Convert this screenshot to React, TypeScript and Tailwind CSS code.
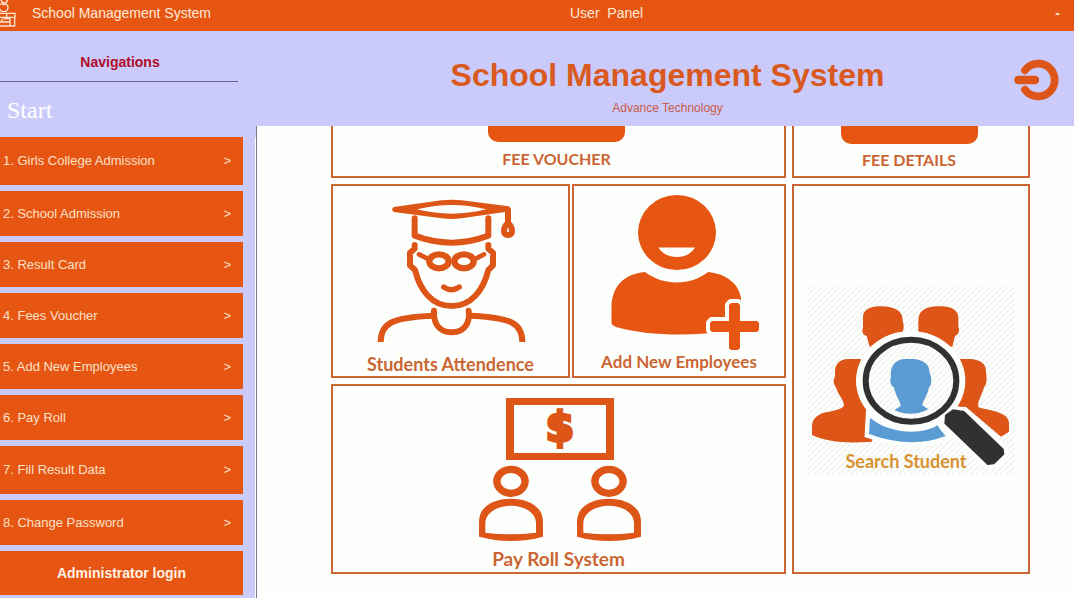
import type { ReactNode } from "react";

const navItems = [
  { label: "1. Girls College Admission", tall: true },
  { label: "2. School Admission" },
  { label: "3. Result Card" },
  { label: "4. Fees Voucher" },
  { label: "5. Add New Employees" },
  { label: "6. Pay Roll" },
  { label: "7. Fill Result Data", tall: true },
  { label: "8. Change Password" },
];

function DeskLogo() {
  return (
    <svg viewBox="0 0 48 84" className="h-7 w-4 shrink-0" fill="none" stroke="#fbe3cf" strokeWidth="4" aria-hidden="true">
      <path d="M4 0 C4 6 8 9 13 9 C18 9 22 6 22 0" />
      <path d="M0 14 C4 10 10 12 12 14 C16 10 24 13 24 22 C24 31 18 35 12 35 C6 35 0 32 0 26" />
      <path d="M0 40 H45 V52 H0 M20 40 V50 M30 54 V78 M44 52 V78 H0 M0 66 H28 M6 56 V66 M10 56 H28" />
    </svg>
  );
}

function PowerIcon() {
  return (
    <svg viewBox="0 0 135 126" className="h-[42px] w-[45px]" fill="none" stroke="#dd5618" strokeLinecap="round" aria-hidden="true">
      <path d="M33 34 C44 19 58 14 74 14 A48 49 0 0 1 74 112 C56 112 43 106 33 92" strokeWidth="23" />
      <path d="M13 63 H63" strokeWidth="25" />
    </svg>
  );
}

function StudentArt() {
  return (
    <svg viewBox="147 228 459 444" className="h-[148px] w-[153px]" fill="none" stroke="#dd5618" strokeWidth="18" strokeLinecap="round" strokeLinejoin="round" aria-hidden="true">
      <path
        fill="#dd5618"
        stroke="none"
        fillRule="evenodd"
        d="M206 261 L350 241 Q380 237 410 241 L551 259 Q558 262 556 276 L540 276 L410 295 Q380 299 350 295 L206 276 Q197 268 206 261Z M276 268 Q330 255 380 255 Q430 255 484 268 Q430 281 380 281 Q330 281 276 268Z"
      />
      <path d="M549 270 V306" />
      <path d="M549 309 C534 322 532 345 549 345 C566 345 564 322 549 309Z" />
      <path d="M269 295 V347 Q380 389 490 347 V295" />
      <path d="M269 375 V386 L255 398 V436 L270 450 C285 510 320 558 380 558 C440 558 475 510 490 450 L504 436 V398 L490 386 V375" />
      <ellipse cx="342" cy="424" rx="29" ry="21" strokeWidth="19" />
      <ellipse cx="417" cy="424" rx="29" ry="21" strokeWidth="19" />
      <path d="M282 403 L312 418 M477 403 L448 418" strokeWidth="14" />
      <path d="M356 501 Q380 517 403 501" strokeWidth="16" />
      <path d="M327 572 C325 600 335 637 380 637 C425 637 435 600 431 572" />
      <path d="M167 666 C167 610 200 592 325 587 M592 666 C592 610 560 592 433 587" strokeLinecap="butt" />
    </svg>
  );
}

function EmployeeArt() {
  return (
    <svg viewBox="599 194 160 156" className="h-[156px] w-40" fill="#e65612" aria-hidden="true">
      <ellipse cx="677" cy="232.500" rx="39" ry="37.500" />
      <path d="M658.500 247.500 H695 C691 254 685 257 677 257 C669 257 662 254 658.500 247.500Z" fill="#fdfffc" />
      <path d="M611.500 323 V307 C612 286 624 274 645 272 C664 286 690 286 708 272 C728 274 739 285 741 298 V327 L706 333.500 C674 336 640 334 616 327 Q611.500 325 611.500 323Z" />
      <g stroke="#fdfffc" strokeWidth="8" strokeLinejoin="round">
        <path d="M731 303 H738 L740 305 V321 H757 L759 323 V330 L757 332 H740 V348 L738 350 H731 L729 348 V332 H712 L710 330 V323 L712 321 H729 V305Z" />
      </g>
      <path d="M731 303 H738 L740 305 V321 H757 L759 323 V330 L757 332 H740 V348 L738 350 H731 L729 348 V332 H712 L710 330 V323 L712 321 H729 V305Z" />
    </svg>
  );
}

function PayrollPerson() {
  return (
    <>
      <ellipse cx="153" cy="304" rx="42.500" ry="36" fill="none" stroke="#dd5618" strokeWidth="22" />
      <path
        fillRule="evenodd"
        d="M57 470 V425 C57 380 100 356 153 356 C206 356 249 380 249 425 V470 Q153 496 57 470Z M76 458 V430 C76 400 110 377 153 377 C196 377 228 400 228 430 V458 Q153 468 76 458Z"
      />
    </>
  );
}

function PayrollArt() {
  return (
    <svg viewBox="45 51 504 435" className="h-[145px] w-[168px]" fill="#dd5618" aria-hidden="true">
      <path fillRule="evenodd" d="M138 54 H462 V240 H138Z M162 75 V219 H438 V75Z" />
      <text
        x="300"
        y="184"
        textAnchor="middle"
        className="font-['DejaVu_Sans'] text-[122px] font-bold"
        stroke="#dd5618"
        strokeWidth="10"
      >
        $
      </text>
      <PayrollPerson />
      <g transform="translate(294 0)">
        <PayrollPerson />
      </g>
    </svg>
  );
}

function SearchArt() {
  const handle = "M440 406 L462 390 L495 395 L612 508 L614 522 L584 551 L566 553 L438 430Z";
  const shoulders = "M213 413 C270 462 370 466 415 436 L422 446 L440 468 Q336 508 210 462Z";
  return (
    <svg viewBox="27 21 621 564" className="h-[188px] w-[207px]" aria-hidden="true">
      <defs>
        <pattern id="hatch" width="18" height="18" patternUnits="userSpaceOnUse">
          <path d="M-2 20 L20 -2" stroke="#f0f1ee" strokeWidth="4" />
        </pattern>
      </defs>
      <rect x="27" y="21" width="621" height="564" fill="url(#hatch)" />
      <g fill="#dd5618">
        <path d="M212 200 L203 168 C192 165 187 155 192 143 V108 C195 85 220 79 245 79 C290 79 312 95 311 122 C316 138 314 150 310 158 L290 200Z" />
        <path d="M460 200 L468 168 C480 162 483 150 478 140 V110 C475 85 450 79 420 79 C375 79 357 95 358 125 V156 L390 200Z" />
        <path d="M185 237 H148 C120 237 108 255 108 275 V290 C102 300 103 312 110 320 C118 345 135 360 135 376 C130 388 110 392 80 397 C50 405 39 420 39 440 V465 C80 485 140 491 218 485 L250 400Z" />
        <path d="M483 237 H515 C550 240 562 255 561 275 C565 300 562 315 555 322 C548 350 535 360 538 382 C570 392 630 395 630 430 V455 L606 470 L500 380 L440 385Z" />
      </g>
      <ellipse cx="335" cy="302" rx="164" ry="149" fill="#fdfffc" />
      <path d={shoulders} fill="#fdfffc" stroke="#fdfffc" strokeWidth="26" />
      <path d={handle} fill="#fdfffc" stroke="#fdfffc" strokeWidth="26" />
      <path d={shoulders} fill="#5b9bd3" />
      <ellipse cx="336" cy="302" rx="136" ry="123" fill="url(#hatch)" stroke="#313131" strokeWidth="18" />
      <path
        fill="#5b9bd3"
        d="M345 237 C375 240 392 255 391 275 C398 290 400 315 390 322 C384 352 372 360 370 376 L388 388 Q336 414 286 390 L305 378 C303 360 290 350 285 322 C273 316 272 300 276 290 C272 258 290 237 320 237Z"
      />
      <path d={handle} fill="#313131" stroke="#313131" strokeWidth="4" strokeLinejoin="round" />
    </svg>
  );
}

const frame = "flex w-full flex-col items-center border-2 border-[#cb6534]";

function Caption({ children, size = "text-lg" }: { children: ReactNode; size?: string }) {
  return <span className={`font-['Lato'] leading-5 font-bold text-[#cb6534] ${size}`}>{children}</span>;
}

export default function App() {
  return (
    <div className="flex min-h-screen flex-col bg-[#fdfffc] font-['Liberation_Sans',sans-serif]">
      <header className="grid h-[31px] grid-cols-[570fr_504fr] items-start bg-[#e65612] text-sm leading-5 text-[#fdeadb]">
        <div className="flex gap-4">
          <DeskLogo />
          <span className="pt-[3px]">School Management System</span>
        </div>
        <div className="flex justify-between pt-[3px] pr-3.5">
          <span className="whitespace-pre">User  Panel</span>
          <button type="button" aria-label="Minimize" className="font-bold">-</button>
        </div>
      </header>

      <div className="flex flex-1">
        <aside className="flex w-[257px] shrink-0 flex-col bg-[#cacbfb]">
          <div className="flex h-[95px] flex-col">
            <h2 className="mr-[19px] border-b border-[#66668c] pt-[21px] pb-[9px] pl-0.5 text-center text-sm leading-5 font-bold text-[#b00c28]">
              Navigations
            </h2>
            <p className="pt-3.5 pl-[7px] font-['Liberation_Serif',serif] text-2xl leading-7 text-white">Start</p>
          </div>
          <div className="flex-1 border-r border-[#77778c] pt-[11px]">
            <nav className="flex h-full flex-col gap-1.5 border-r border-white pr-3 pb-[3px]">
              {navItems.map((item) => (
                <button
                  key={item.label}
                  type="button"
                  className={`flex items-center justify-between bg-[#e65612] pr-3 pl-[3px] text-[13px] text-[#fbe0c8] ${item.tall ? "h-12" : "h-[45px]"}`}
                >
                  <span>{item.label}</span>
                  <span>&gt;</span>
                </button>
              ))}
              <button type="button" className="h-11 bg-[#e65612] text-sm font-bold text-[#fff1e4]">
                Administrator login
              </button>
            </nav>
          </div>
        </aside>

        <div className="flex min-w-0 flex-1 flex-col">
          <div className="relative flex h-[95px] flex-col items-center bg-[#cacbfb] pt-[26px] pl-1">
            <h1 className="text-[32px] leading-9 font-bold text-[#d9591f]">School Management System</h1>
            <p className="pt-[7px] text-xs leading-4 text-[#c95a48]">Advance Technology</p>
            <button type="button" aria-label="Log out" className="absolute top-7 right-[15px]">
              <PowerIcon />
            </button>
          </div>

          <main className="grid grid-cols-[455fr_238fr] gap-1.5 pr-11 pb-6 pl-[74px]">
            <button type="button" className={`${frame} h-[52px] border-t-0 pr-1`}>
              <span className="mb-[7px] h-4 w-[137px] shrink-0 rounded-b-[10px] bg-[#e65612]" />
              <Caption size="text-base">FEE VOUCHER</Caption>
            </button>
            <button type="button" className={`${frame} h-[52px] border-t-0 pr-1`}>
              <span className="mb-1.5 h-[18px] w-[137px] shrink-0 rounded-b-[10px] bg-[#e65612]" />
              <Caption size="text-base">FEE DETAILS</Caption>
            </button>

            <div className="flex flex-col gap-1.5">
              <div className="grid grid-cols-[239fr_214fr] gap-0.5">
                <button type="button" className={`${frame} h-[194px] gap-2.5 pt-2.5`}>
                  <StudentArt />
                  <Caption>Students Attendence</Caption>
                </button>
                <button type="button" className={`${frame} h-[194px] gap-0.5 pt-2`}>
                  <EmployeeArt />
                  <Caption size="text-[17px]">Add New Employees</Caption>
                </button>
              </div>
              <button type="button" className={`${frame} h-[190px] gap-[7px] pt-[11px]`}>
                <PayrollArt />
                <Caption size="text-[19px]">Pay Roll System</Caption>
              </button>
            </div>

            <button type="button" className={`${frame} pt-[101px]`}>
              <span className="relative block">
                <SearchArt />
                <span className="absolute inset-x-0 bottom-1 pr-2.5 text-center font-['Lato'] text-lg leading-5 font-bold text-[#d8922f]">
                  Search Student
                </span>
              </span>
            </button>
          </main>
        </div>
      </div>
    </div>
  );
}
